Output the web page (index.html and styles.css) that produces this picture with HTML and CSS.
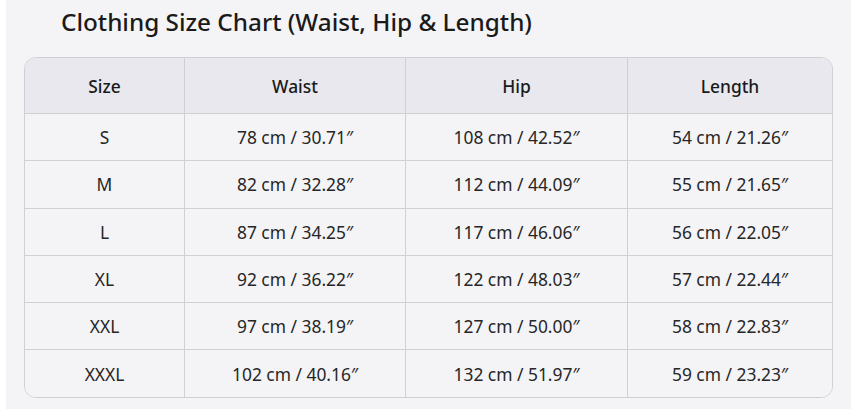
FILE: index.html
```html
<!DOCTYPE html>
<html>
<head>
<meta charset="utf-8">
<link rel="stylesheet" href="styles.css">
</head>
<body>
<div class="panel">
  <h1 class="title">Clothing Size Chart (Waist, Hip &amp; Length)</h1>
  <table class="chart">
    <colgroup>
      <col class="c1"><col class="c2"><col class="c3"><col class="c4">
    </colgroup>
    <thead>
      <tr><th>Size</th><th>Waist</th><th>Hip</th><th>Length</th></tr>
    </thead>
    <tbody>
      <tr><td>S</td><td>78 cm / 30.71″</td><td>108 cm / 42.52″</td><td>54 cm / 21.26″</td></tr>
      <tr><td>M</td><td>82 cm / 32.28″</td><td>112 cm / 44.09″</td><td>55 cm / 21.65″</td></tr>
      <tr><td>L</td><td>87 cm / 34.25″</td><td>117 cm / 46.06″</td><td>56 cm / 22.05″</td></tr>
      <tr><td>XL</td><td>92 cm / 36.22″</td><td>122 cm / 48.03″</td><td>57 cm / 22.44″</td></tr>
      <tr><td>XXL</td><td>97 cm / 38.19″</td><td>127 cm / 50.00″</td><td>58 cm / 22.83″</td></tr>
      <tr><td>XXXL</td><td>102 cm / 40.16″</td><td>132 cm / 51.97″</td><td>59 cm / 23.23″</td></tr>
    </tbody>
  </table>
</div>
</body>
</html>
```
FILE: styles.css
```css
html, body {
  margin: 0;
  padding: 0;
  background: #ffffff;
}
body {
  font-family: "Noto Sans", "Open Sans", sans-serif;
  color: #1f1f1f;
}
.panel {
  margin-left: 6px;
  width: 845px;
  height: 409px;
  box-sizing: border-box;
  background: #f4f4f7;
  padding: 0 18px 0 18px;
  display: flex;
  flex-direction: column;
}
.title {
  margin: 0;
  padding: 5px 0 0 37px;
  height: 57px;
  box-sizing: border-box;
  font-size: 24.3px;
  font-weight: 500;
  line-height: 34px;
  color: #1a1a1a;
}
.chart {
  width: 809px;
  box-sizing: border-box;
  border-collapse: separate;
  border-spacing: 0;
  border: 1px solid #cfcfd4;
  border-radius: 12px;
  overflow: hidden;
  table-layout: fixed;
  font-size: 17.4px;
}
.c1 { width: 159px; }
.c2 { width: 221px; }
.c3 { width: 222px; }
.c4 { width: 205px; }
.chart th, .chart td {
  text-align: center;
  border-left: 1px solid #cfcfd4;
  border-top: 1px solid #cfcfd4;
  padding: 0;
}
.chart th:first-child, .chart td:first-child {
  border-left: none;
}
.chart thead th {
  border-top: none;
  background: #e8e8ee;
  height: 55px;
  font-weight: 500;
  color: #1a1a1a;
}
.chart tbody td {
  height: 46.3px;
  background: #f4f4f7;
  color: #262626;
}
```
